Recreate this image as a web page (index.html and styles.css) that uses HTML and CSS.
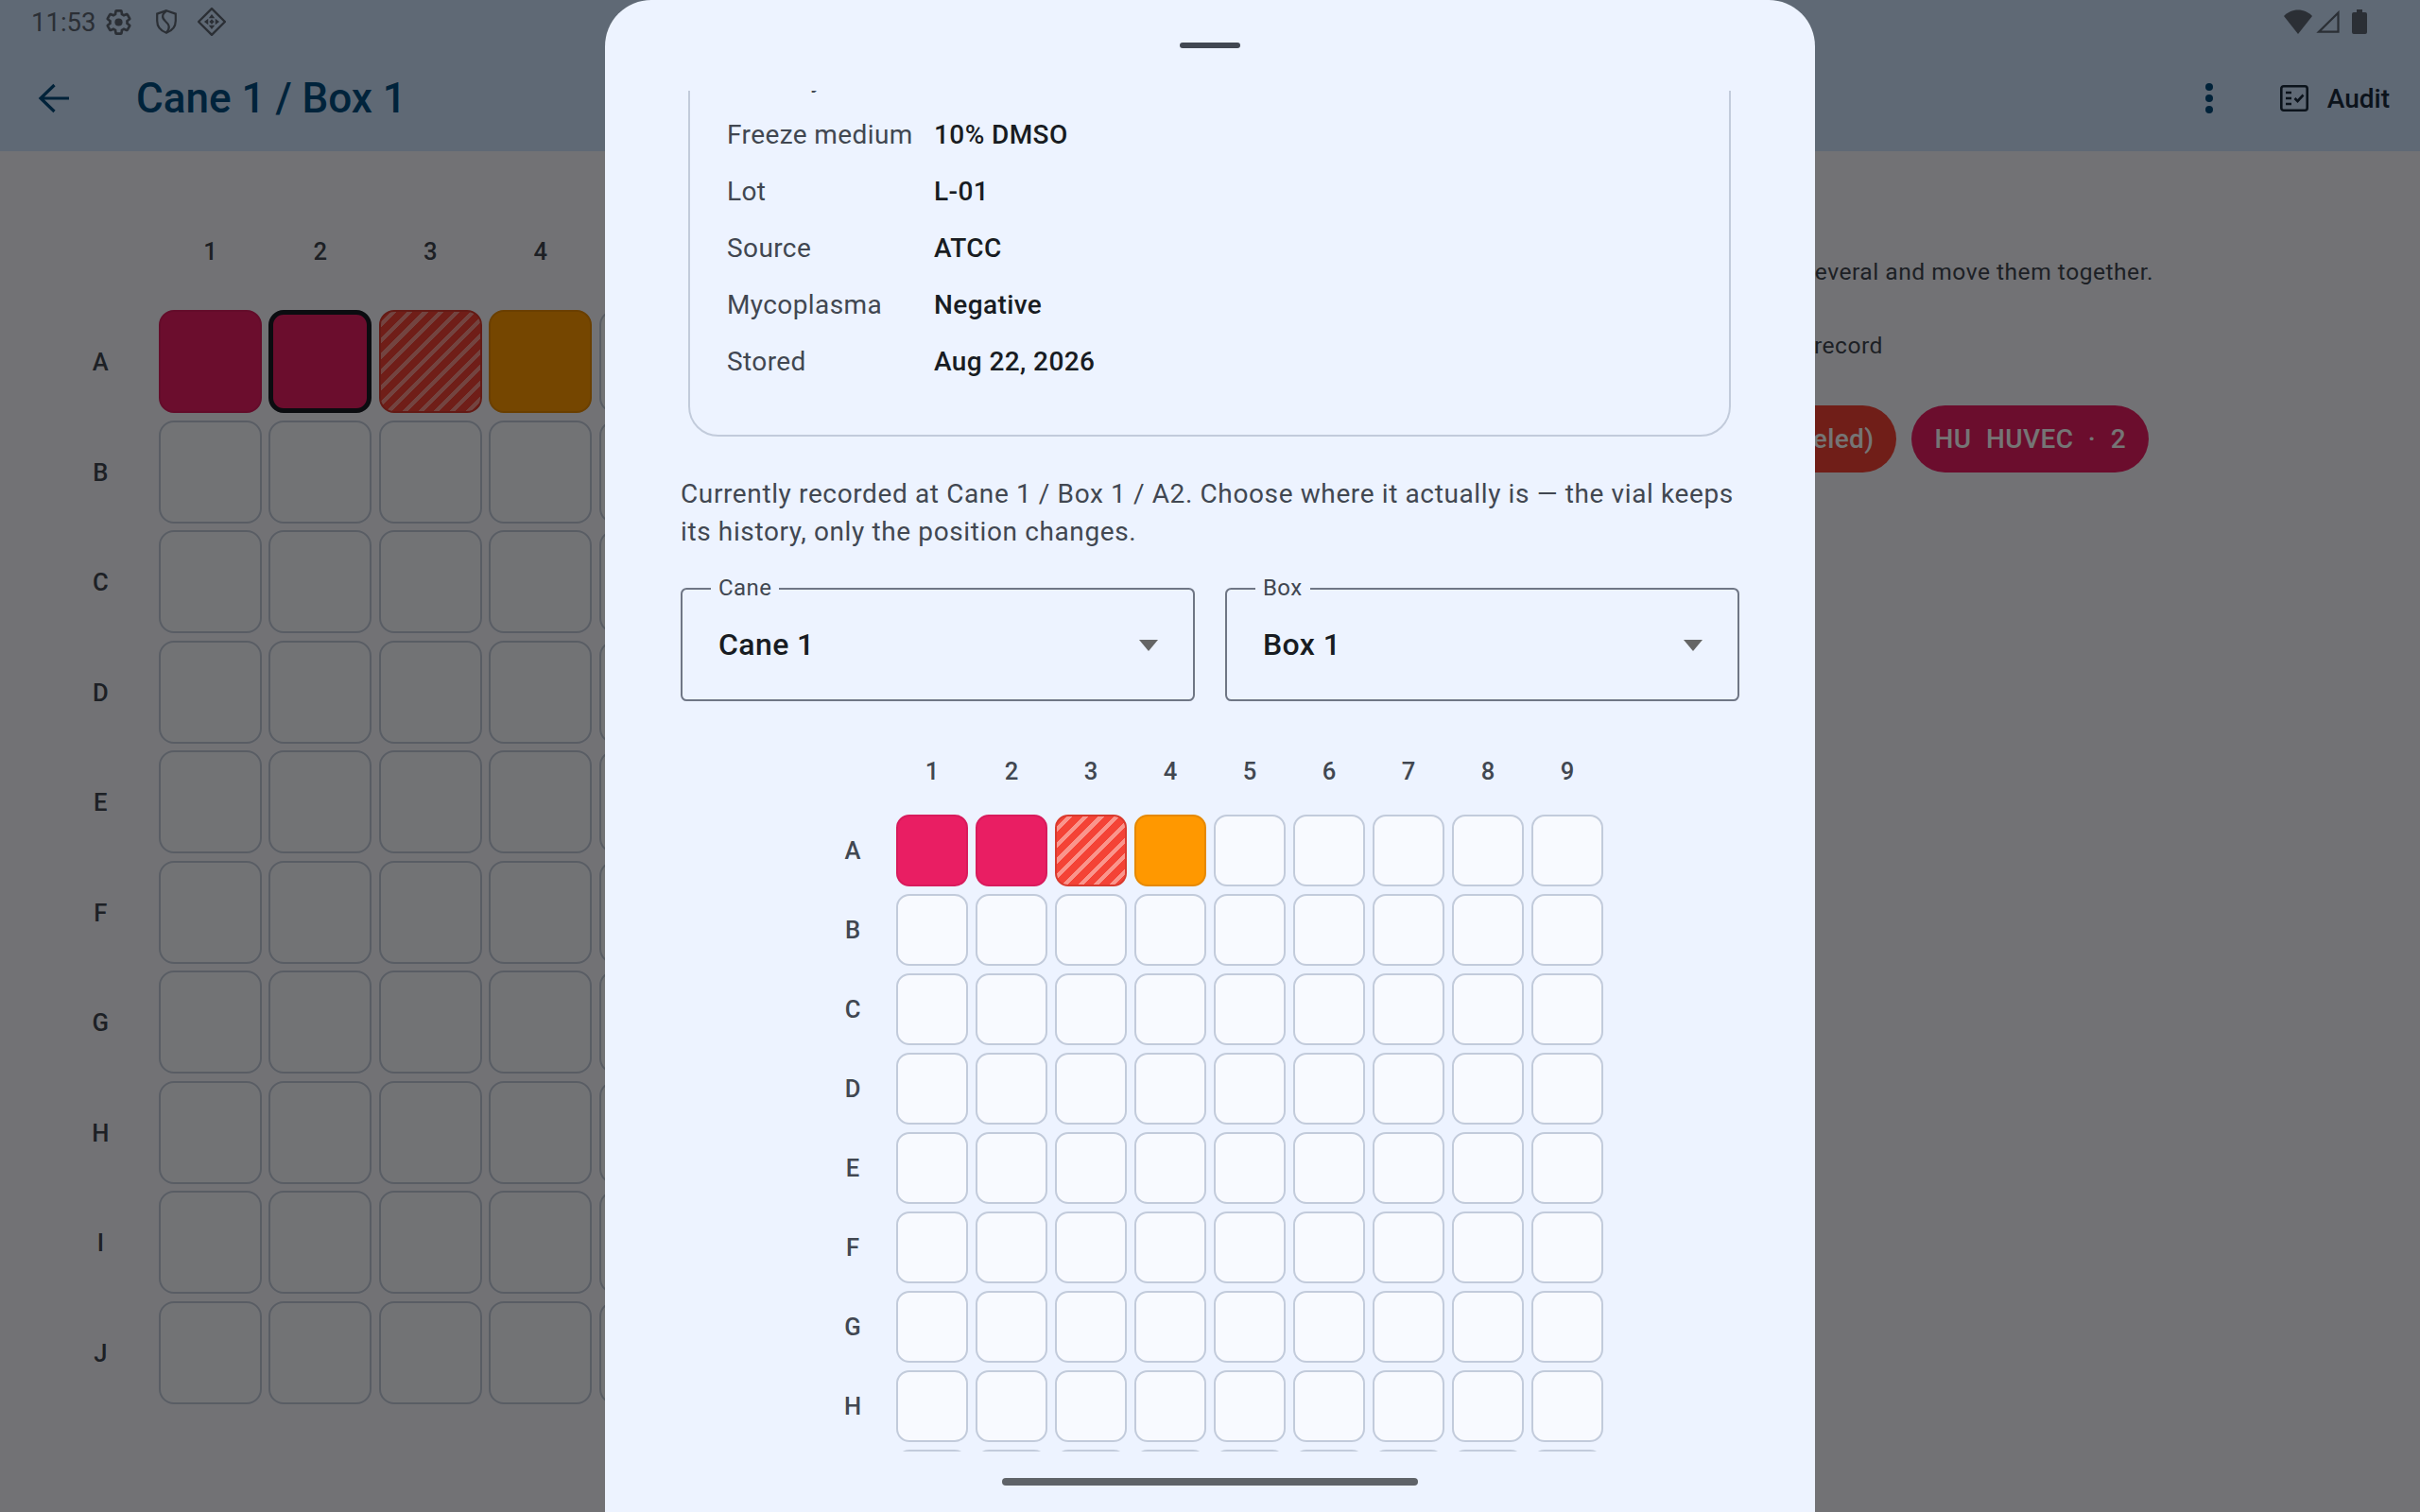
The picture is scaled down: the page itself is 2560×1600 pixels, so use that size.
FILE: index.html
```html
<!DOCTYPE html>
<html lang="en">
<head>
<meta charset="utf-8">
<title>Cane 1 / Box 1</title>
<link rel="stylesheet" href="styles.css">
</head>
<body>
<div class="app">
  <header class="appbar">
    <svg class="back" viewBox="0 0 34 32"><path d="M33 16H3M17.500 2 3 16l14.500 14"/></svg>
    <h1 class="title">Cane 1 / Box 1</h1>
    <svg class="kebab" viewBox="0 0 8 32"><circle cx="4" cy="4" r="4"/><circle cx="4" cy="16" r="4"/><circle cx="4" cy="28" r="4"/></svg>
    <div class="audit">
      <svg class="audit-icon" viewBox="0 0 30 28"><rect x="1.300" y="1.300" width="27.400" height="25.400" rx="2.500"/><path d="M6 8h6M6 14h6M6 20h6M15.500 14l3 3 6-6.500"/></svg>
      <span>Audit</span>
    </div>
  </header>
  <main class="main">
    <div class="plate plate-big">
      <span></span><span class="col">1</span><span class="col">2</span><span class="col">3</span><span class="col">4</span><span class="col">5</span><span class="col">6</span><span class="col">7</span><span class="col">8</span><span class="col">9</span>
      <span class="row">A</span><i class="cell pink"></i><i class="cell pink selected"></i><i class="cell striped"></i><i class="cell orange"></i><i class="cell"></i><i class="cell"></i><i class="cell"></i><i class="cell"></i><i class="cell"></i>
      <span class="row">B</span><i class="cell"></i><i class="cell"></i><i class="cell"></i><i class="cell"></i><i class="cell"></i><i class="cell"></i><i class="cell"></i><i class="cell"></i><i class="cell"></i>
      <span class="row">C</span><i class="cell"></i><i class="cell"></i><i class="cell"></i><i class="cell"></i><i class="cell"></i><i class="cell"></i><i class="cell"></i><i class="cell"></i><i class="cell"></i>
      <span class="row">D</span><i class="cell"></i><i class="cell"></i><i class="cell"></i><i class="cell"></i><i class="cell"></i><i class="cell"></i><i class="cell"></i><i class="cell"></i><i class="cell"></i>
      <span class="row">E</span><i class="cell"></i><i class="cell"></i><i class="cell"></i><i class="cell"></i><i class="cell"></i><i class="cell"></i><i class="cell"></i><i class="cell"></i><i class="cell"></i>
      <span class="row">F</span><i class="cell"></i><i class="cell"></i><i class="cell"></i><i class="cell"></i><i class="cell"></i><i class="cell"></i><i class="cell"></i><i class="cell"></i><i class="cell"></i>
      <span class="row">G</span><i class="cell"></i><i class="cell"></i><i class="cell"></i><i class="cell"></i><i class="cell"></i><i class="cell"></i><i class="cell"></i><i class="cell"></i><i class="cell"></i>
      <span class="row">H</span><i class="cell"></i><i class="cell"></i><i class="cell"></i><i class="cell"></i><i class="cell"></i><i class="cell"></i><i class="cell"></i><i class="cell"></i><i class="cell"></i>
      <span class="row">I</span><i class="cell"></i><i class="cell"></i><i class="cell"></i><i class="cell"></i><i class="cell"></i><i class="cell"></i><i class="cell"></i><i class="cell"></i><i class="cell"></i>
      <span class="row">J</span><i class="cell"></i><i class="cell"></i><i class="cell"></i><i class="cell"></i><i class="cell"></i><i class="cell"></i><i class="cell"></i><i class="cell"></i><i class="cell"></i>
    </div>
    <aside class="side">
      <p class="side-line">Tap a vial to open it. Long-press to select several and move them together.</p>
      <p class="side-line side-line-short">Striped vials are kept on record</p>
      <div class="chips">
        <span class="chip chip-red">Unknown (unlabeled)</span>
        <span class="chip chip-pink"><b>HU</b><b>HUVEC</b><b>·</b><b>2</b></span>
      </div>
    </aside>
  </main>
  <div class="scrim"></div>
  <div class="status">
    <span class="clock">11:53</span>
    <svg class="st-gear" viewBox="0 0 24 24"><path d="M19.430 12.980c.04-.32.07-.64.07-.98s-.03-.66-.07-.98l2.110-1.650c.19-.15.24-.42.12-.64l-2-3.460c-.12-.22-.39-.3-.61-.22l-2.490 1c-.52-.4-1.080-.73-1.690-.98l-.38-2.650C14.460 2.180 14.250 2 14 2h-4c-.25 0-.46.18-.49.42l-.38 2.650c-.61.25-1.170.59-1.690.98l-2.490-1c-.23-.09-.49 0-.61.22l-2 3.460c-.13.22-.07.49.12.64l2.110 1.650c-.04.32-.07.65-.07.98s.03.66.07.98l-2.110 1.650c-.19.15-.24.42-.12.64l2 3.460c.12.22.39.3.61.22l2.490-1c.52.4 1.080.73 1.690.98l.38 2.650c.03.24.24.42.49.42h4c.25 0 .46-.18.49-.42l.38-2.650c.61-.25 1.170-.59 1.690-.98l2.490 1c.23.09.49 0 .61-.22l2-3.460c.12-.22.07-.49-.12-.64l-2.110-1.650z"/><circle class="fill" cx="12" cy="12" r="3.400"/></svg>
    <svg class="st-shield" viewBox="0 0 22 26"><path d="M11 1.200 20.800 4.600V12c0 6-4 10.600-9.800 12.800C5.200 22.600 1.200 18 1.200 12V4.600z"/><path d="M11 1.500C6 5 6 9 10 12.500s5.500 7 1 12"/></svg>
    <svg class="st-diamond" viewBox="0 0 28 28"><path d="M14 1 27 14 14 27 1 14z"/><path class="fill" d="M14 6.500 17 10.500H11zM14 21.500 11 17.500H17zM6.500 14 10.500 11V17zM21.500 14 17.500 17V11zM14 11.500 16.500 14 14 16.500 11.500 14z"/></svg>
    <span class="st-spacer"></span>
    <svg class="st-wifi" viewBox="0 0 30 26"><path class="fill" d="M15 26 0 7C4 3 9 .5 15 .5S26 3 30 7z"/></svg>
    <svg class="st-signal" viewBox="0 0 25 24"><path d="M23.500 2.500V22.700H3z"/></svg>
    <svg class="st-battery" viewBox="0 0 16 26"><path class="fill" d="M5 0h6v3h3a2 2 0 0 1 2 2v19a2 2 0 0 1-2 2H2a2 2 0 0 1-2-2V5a2 2 0 0 1 2-2h3z"/></svg>
  </div>
  <section class="sheet">
    <div class="sheet-top"><span class="handle"></span></div>
    <div class="sheet-body">
      <div class="card">
        <div class="info"><span class="k">Viability</span><span class="v">92%</span></div>
        <div class="info"><span class="k">Freeze medium</span><span class="v">10% DMSO</span></div>
        <div class="info"><span class="k">Lot</span><span class="v">L-01</span></div>
        <div class="info"><span class="k">Source</span><span class="v">ATCC</span></div>
        <div class="info"><span class="k">Mycoplasma</span><span class="v">Negative</span></div>
        <div class="info"><span class="k">Stored</span><span class="v">Aug 22, 2026</span></div>
      </div>
      <p class="para">Currently recorded at Cane 1 / Box 1 / A2. Choose where it actually is — the vial keeps its history, only the position changes.</p>
      <div class="fields">
        <div class="field"><span class="legend">Cane</span><span class="value">Cane 1</span><i class="caret"></i></div>
        <div class="field"><span class="legend">Box</span><span class="value">Box 1</span><i class="caret"></i></div>
      </div>
      <div class="plate plate-mini">
        <span></span><span class="col">1</span><span class="col">2</span><span class="col">3</span><span class="col">4</span><span class="col">5</span><span class="col">6</span><span class="col">7</span><span class="col">8</span><span class="col">9</span>
        <span class="row">A</span><i class="cell pink"></i><i class="cell pink"></i><i class="cell striped"></i><i class="cell orange"></i><i class="cell"></i><i class="cell"></i><i class="cell"></i><i class="cell"></i><i class="cell"></i>
        <span class="row">B</span><i class="cell"></i><i class="cell"></i><i class="cell"></i><i class="cell"></i><i class="cell"></i><i class="cell"></i><i class="cell"></i><i class="cell"></i><i class="cell"></i>
        <span class="row">C</span><i class="cell"></i><i class="cell"></i><i class="cell"></i><i class="cell"></i><i class="cell"></i><i class="cell"></i><i class="cell"></i><i class="cell"></i><i class="cell"></i>
        <span class="row">D</span><i class="cell"></i><i class="cell"></i><i class="cell"></i><i class="cell"></i><i class="cell"></i><i class="cell"></i><i class="cell"></i><i class="cell"></i><i class="cell"></i>
        <span class="row">E</span><i class="cell"></i><i class="cell"></i><i class="cell"></i><i class="cell"></i><i class="cell"></i><i class="cell"></i><i class="cell"></i><i class="cell"></i><i class="cell"></i>
        <span class="row">F</span><i class="cell"></i><i class="cell"></i><i class="cell"></i><i class="cell"></i><i class="cell"></i><i class="cell"></i><i class="cell"></i><i class="cell"></i><i class="cell"></i>
        <span class="row">G</span><i class="cell"></i><i class="cell"></i><i class="cell"></i><i class="cell"></i><i class="cell"></i><i class="cell"></i><i class="cell"></i><i class="cell"></i><i class="cell"></i>
        <span class="row">H</span><i class="cell"></i><i class="cell"></i><i class="cell"></i><i class="cell"></i><i class="cell"></i><i class="cell"></i><i class="cell"></i><i class="cell"></i><i class="cell"></i>
        <span class="row">I</span><i class="cell"></i><i class="cell"></i><i class="cell"></i><i class="cell"></i><i class="cell"></i><i class="cell"></i><i class="cell"></i><i class="cell"></i><i class="cell"></i>
      </div>
    </div>
    <div class="sheet-foot"><span class="home"></span></div>
  </section>
</div>
</body>
</html>
```
FILE: styles.css
```css
* { box-sizing: border-box; }
html, body { margin: 0; padding: 0; }
body { font-family: Roboto, "Liberation Sans", sans-serif; }
p, h1 { margin: 0; }

.app {
  position: relative;
  width: 2560px;
  height: 1600px;
  overflow: hidden;
  background: #f8f9ff;
  color: #181c22;
}

/* App bar */
.appbar {
  height: 160px;
  padding: 48px 32px 0 40px;
  background: #d0e4ff;
  color: #004a7c;
  display: flex;
  align-items: center;
}
.back { width: 34px; height: 32px; flex: none; }
.back path { fill: none; stroke: currentColor; stroke-width: 3.2px; }
.title {
  margin-left: 70px;
  font-size: 44px;
  font-weight: 500;
  letter-spacing: 0;
  color: #004d80;
}
.kebab { width: 8px; height: 32px; margin-left: auto; fill: currentColor; }
.audit {
  margin-left: 71px;
  display: flex;
  align-items: center;
  gap: 20px;
  color: #1a2a3c;
  font-size: 28px;
  font-weight: 500;
}
.audit-icon { width: 30px; height: 28px; }
.audit-icon rect, .audit-icon path { fill: none; stroke: currentColor; stroke-width: 2.600px; }

/* Plates */
.plate { display: grid; flex: none; }
.plate-big {
  grid-template-columns: 108.600px repeat(9, 109px);
  grid-auto-rows: 109px;
  gap: 7.500px 7.400px;
  font-size: 25.6px;
}
.plate-big .row { padding-top: 1px; }
.plate-mini {
  grid-template-columns: 78px repeat(9, 76px);
  grid-auto-rows: 76px;
  gap: 8px;
  width: 836px;
  margin: 36px auto 0;
  font-size: 25.6px;
}
.plate-mini .row { padding-left: 2px; }
.col, .row {
  display: flex;
  align-items: center;
  justify-content: center;
  font-weight: 500;
  color: #414751;
}
.cell {
  display: block;
  border: 2px solid #c2cbdb;
  border-radius: 14px;
  background: #f8faff;
}
.plate-big .cell { border-radius: 16px; }
.pink { background: #e91e63; border-color: #d81b5c; }
.orange { background: #ff9800; border-color: #e68900; }
.striped {
  border-color: #d93a2e;
  background: repeating-linear-gradient(135deg, #f44336 0 7.500px, #fa958c 7.500px 11.800px);
}
.plate .selected { border: 5px solid #181c24; }

/* Background content */
.main {
  display: flex;
  padding: 51.500px 0 0 52px;
}
.side {
  flex: 1;
  min-width: 0;
  padding-top: 60.500px;
  display: flex;
  flex-direction: column;
  align-items: flex-end;
  padding-right: 282px;
  font-size: 24.6px;
  line-height: 32px;
  letter-spacing: .5px;
  color: #414751;
  white-space: nowrap;
}
.side-line-short { margin: 46px 286px 0 0; }
.chips { display: flex; gap: 16px; margin: 47px 5px 0 0; }
.chip {
  height: 71px;
  padding: 0 24px;
  display: flex;
  align-items: center;
  border-radius: 36px;
  color: #fff;
  font-size: 28px;
  font-weight: 500;
  letter-spacing: .4px;
}
.chip b { font-weight: 500; margin-right: 15.500px; }
.chip b:last-child { margin-right: 0; }
.chip-red { background: #f44336; }
.chip-pink { background: #e91e63; }

.scrim { position: absolute; inset: 0; background: rgba(0, 0, 0, .54); }

/* System status bar, above the scrim */
.status {
  position: absolute;
  top: 0;
  left: 0;
  right: 0;
  height: 46px;
  padding: 0 56px 0 33px;
  display: flex;
  align-items: center;
  color: #2b2f35;
}
.status svg { flex: none; }
.status svg path, .status svg circle { fill: none; stroke: currentColor; stroke-width: 2.200px; }
.status svg .fill { fill: currentColor; stroke: none; }
.clock { font-size: 27.5px; }
.st-gear { width: 29px; height: 29px; margin-left: 10px; }
.st-shield { width: 22px; height: 26px; margin-left: 25px; }
.st-diamond { width: 30px; height: 30px; margin-left: 22px; }
.st-spacer { flex: 1; }
.st-wifi { width: 30px; height: 26px; }
.st-signal { width: 25px; height: 24px; margin-left: 4px; }
.st-battery { width: 16px; height: 26px; margin-left: 13px; }

/* Bottom sheet */
.sheet {
  position: absolute;
  top: 0;
  left: 640px;
  width: 1280px;
  height: 1600px;
  border-radius: 49px 49px 0 0;
  background: #edf3ff;
  display: flex;
  flex-direction: column;
}
.sheet-top {
  height: 96px;
  flex: none;
  display: flex;
  justify-content: center;
  padding-top: 45px;
}
.handle { width: 64px; height: 6.400px; border-radius: 4px; background: #414751; }
.sheet-body {
  height: 1440px;
  flex: none;
  overflow: hidden;
  padding: 0 80px;
}
.sheet-foot {
  flex: 1;
  display: flex;
  justify-content: center;
  padding-top: 28px;
}
.home { width: 440px; height: 8px; border-radius: 4px; background: #5f6368; }

.card {
  margin: -46px 9px 0 8px;
  padding: 0 0 48px 39px;
  border: 2px solid #c2cbdb;
  border-radius: 32px;
}
.info {
  height: 60px;
  display: flex;
  align-items: center;
  font-size: 28px;
  letter-spacing: .4px;
}
.k { width: 219px; flex: none; color: #414751; }
.v { font-weight: 500; color: #181c22; }

.para {
  margin-top: 41px;
  font-size: 28px;
  line-height: 40px;
  letter-spacing: .62px;
  color: #414751;
}

.fields { display: flex; gap: 32px; margin-top: 39px; }
.field {
  position: relative;
  flex: 1;
  height: 120px;
  border: 2px solid #6f7685;
  border-radius: 6.400px;
  display: flex;
  align-items: center;
  padding-left: 38px;
}
.legend {
  position: absolute;
  top: -14px;
  left: 30px;
  padding: 0 8px;
  background: #edf3ff;
  font-size: 24px;
  line-height: 24px;
  letter-spacing: .4px;
  color: #414751;
}
.value { font-size: 32px; font-weight: 500; letter-spacing: .4px; color: #181c22; }
.caret {
  position: absolute;
  right: 37px;
  top: 53px;
  border-style: solid;
  border-width: 12px 10px 0;
  border-color: #656565 transparent transparent;
}
```
